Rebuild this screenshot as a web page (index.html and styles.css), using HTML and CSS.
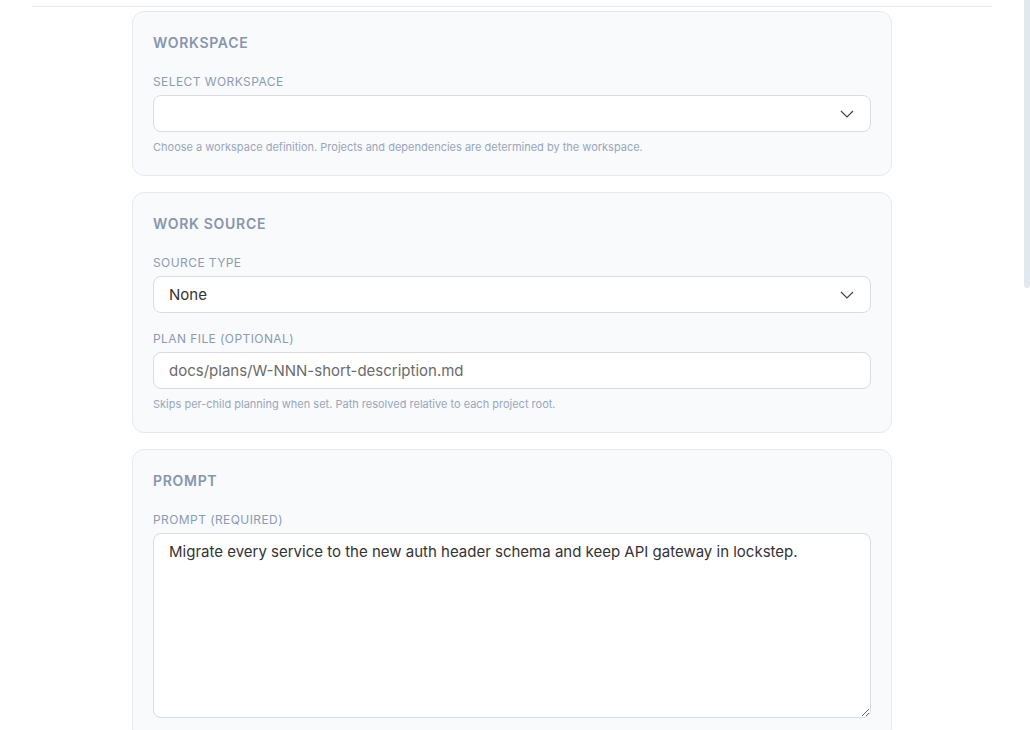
FILE: index.html
```html
<!DOCTYPE html>
<html lang="en">
<head>
  <meta charset="UTF-8">
  <meta name="viewport" content="width=device-width, initial-scale=1.0">
  <title>New Workspace Run</title>
  <link rel="stylesheet" href="styles.css">
</head>
<body>
  <div class="page">
    <div class="topbar"></div>

    <form class="form">
      <section class="card">
        <h2 class="card-title">Workspace</h2>
        <div class="field">
          <label for="workspace">Select Workspace</label>
          <div class="select-wrap">
            <select id="workspace">
              <option value="" selected></option>
            </select>
            <svg class="chevron" width="14" height="8" viewBox="0 0 14 8" fill="none" stroke="currentColor" stroke-width="1.2">
              <path d="M1 1l6 6 6-6"/>
            </svg>
          </div>
          <p class="hint">Choose a workspace definition. Projects and dependencies are determined by the workspace.</p>
        </div>
      </section>

      <section class="card">
        <h2 class="card-title">Work Source</h2>
        <div class="field">
          <label for="sourceType">Source Type</label>
          <div class="select-wrap">
            <select id="sourceType">
              <option value="none" selected>None</option>
              <option value="issue">Issue</option>
            </select>
            <svg class="chevron" width="14" height="8" viewBox="0 0 14 8" fill="none" stroke="currentColor" stroke-width="1.2">
              <path d="M1 1l6 6 6-6"/>
            </svg>
          </div>
        </div>
        <div class="field">
          <label for="planFile">Plan File (Optional)</label>
          <input type="text" id="planFile" placeholder="docs/plans/W-NNN-short-description.md">
          <p class="hint">Skips per-child planning when set. Path resolved relative to each project root.</p>
        </div>
      </section>

      <section class="card">
        <h2 class="card-title">Prompt</h2>
        <div class="field">
          <label for="prompt">Prompt (Required)</label>
          <textarea id="prompt" rows="8">Migrate every service to the new auth header schema and keep API gateway in lockstep.</textarea>
        </div>
      </section>
    </form>
  </div>

  <div class="scroll-thumb"></div>
</body>
</html>
```

FILE: styles.css
```css
body {
  margin: 0;
  width: 1024px;
  background: #fff;
  font-family: Inter, "Noto Sans", sans-serif;
  color: #334155;
}
.page {
  width: 960px;
  margin: 0 auto;
  padding-bottom: 40px;
}
.topbar {
  height: 6px;
  border-bottom: 1px solid #e8ecf2;
}
.form {
  width: 760px;
  margin: 4px auto 0;
  display: flex;
  flex-direction: column;
  gap: 16px;
}
.card {
  background: #f8fafc;
  border: 1px solid #e6eaf0;
  border-radius: 12px;
  padding: 21px 20px 21px;
}
.card-title {
  margin: 0 0 20px;
  font-size: 14px;
  line-height: 20px;
  font-weight: 600;
  letter-spacing: 0.05em;
  text-transform: uppercase;
  color: #8796ad;
}
.field + .field {
  margin-top: 17px;
}
label {
  display: block;
  margin-bottom: 4px;
  font-size: 12px;
  line-height: 18px;
  font-weight: 400;
  letter-spacing: 0.035em;
  text-transform: uppercase;
  color: #8d9bb1;
}
.select-wrap {
  position: relative;
}
input, select, textarea {
  display: block;
  width: 100%;
  box-sizing: border-box;
  margin: 0;
  border: 1px solid #d9dce1;
  border-radius: 8px;
  background: #fff;
  font-family: Inter, "Noto Sans", sans-serif;
  font-size: 15px;
  color: #333;
  outline: none;
}
input, select {
  height: 37px;
  padding: 0 15px;
}
select {
  appearance: none;
  -webkit-appearance: none;
  padding-right: 40px;
}
.chevron {
  position: absolute;
  right: 17px;
  top: 15px;
  color: #444;
  pointer-events: none;
}
input::placeholder {
  color: #6b6b6b;
}
textarea {
  height: 185px;
  padding: 8px 15px;
  line-height: 20px;
  resize: vertical;
}
.hint {
  margin: 8px 0 0;
  font-size: 11px;
  line-height: 14px;
  color: #9aa7bb;
}
.scroll-thumb {
  position: fixed;
  top: 0;
  right: 0;
  width: 6px;
  height: 288px;
  background: #e2e8f0;
  border-radius: 0 0 3px 3px;
}
```
